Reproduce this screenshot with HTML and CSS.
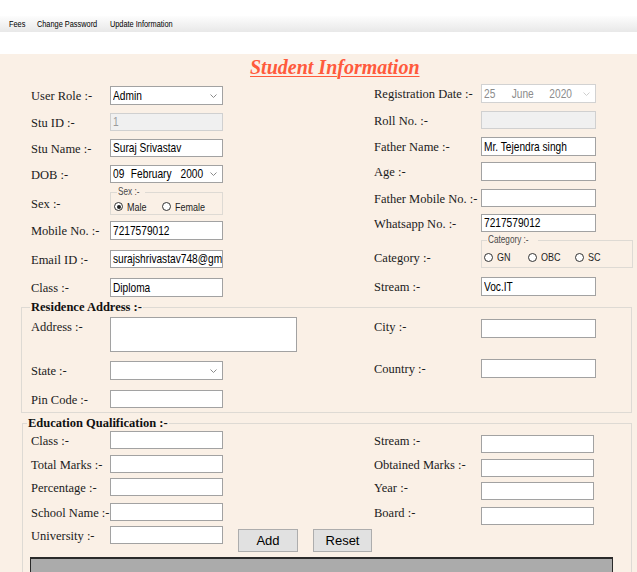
FILE: index.html
```html
<!DOCTYPE html>
<html lang="en">
<head>
<meta charset="utf-8">
<title>Student Information</title>
<link rel="stylesheet" href="styles.css">
</head>
<body>
<div class="topstrip"></div>
<nav class="menubar">
  <div class="menu-items">
    <span class="menu-item">Fees</span>
    <span class="menu-item">Change Password</span>
    <span class="menu-item">Update Information</span>
  </div>
</nav>
<div class="spacer"></div>
<main class="panel">
  <h1 class="title">Student Information</h1>

  <div class="top-grid">
    <div class="col left">
      <div class="row h27"><span class="lbl">User Role :-</span>
        <div class="field select"><span class="nt">Admin</span><svg class="chev" viewBox="0 0 7 4"><polyline points="0.5,0.5 3.5,3.5 6.5,0.5"/></svg></div></div>
      <div class="row h26"><span class="lbl">Stu ID :-</span><div class="field s18 disabled"><span class="nt">1</span></div></div>
      <div class="row h26"><span class="lbl">Stu Name :-</span><div class="field s18"><span class="nt">Suraj Srivastav</span></div></div>
      <div class="row h23"><span class="lbl">DOB :-</span>
        <div class="field s18 select"><span class="nt">09<span class="gap-a">February</span><span class="gap-b">2000</span></span><svg class="chev" viewBox="0 0 7 4"><polyline points="0.5,0.5 3.5,3.5 6.5,0.5"/></svg></div></div>
      <div class="row h33"><span class="lbl lbl-sex">Sex :-</span>
        <fieldset class="radio-group sex">
          <legend><span class="nt">Sex :-</span></legend>
          <span class="opt opt-male"><span class="radio checked"></span><span class="nt">Male</span></span>
          <span class="opt"><span class="radio"></span><span class="nt">Female</span></span>
        </fieldset></div>
      <div class="row h29"><span class="lbl">Mobile No. :-</span><div class="field"><span class="nt">7217579012</span></div></div>
      <div class="row h28"><span class="lbl">Email ID :-</span><div class="field s18"><span class="nt">surajshrivastav748@gmail.com</span></div></div>
      <div class="row h22"><span class="lbl">Class :-</span><div class="field"><span class="nt">Diploma</span></div></div>
    </div>

    <div class="col right">
      <div class="row h27"><span class="lbl">Registration Date :-</span>
        <div class="field faded select"><span class="nt">25<span class="gap-c">June</span><span class="gap-d">2020</span></span><svg class="chev" viewBox="0 0 7 4"><polyline points="0.5,0.5 3.5,3.5 6.5,0.5"/></svg></div></div>
      <div class="row h26"><span class="lbl">Roll No. :-</span><div class="field s18 disabled"></div></div>
      <div class="row h25"><span class="lbl">Father Name :-</span><div class="field"><span class="nt">Mr. Tejendra singh</span></div></div>
      <div class="row h27"><span class="lbl">Age :-</span><div class="field"></div></div>
      <div class="row h25"><span class="lbl">Father Mobile No. :-</span><div class="field s18"></div></div>
      <div class="row h22"><span class="lbl">Whatsapp No. :-</span><div class="field s18"><span class="nt">7217579012</span></div></div>
      <div class="row h41"><span class="lbl lbl-cat">Category :-</span>
        <fieldset class="radio-group category">
          <legend><span class="nt">Category :-</span></legend>
          <span class="opt opt-gn"><span class="radio"></span><span class="nt">GN</span></span>
          <span class="opt opt-obc"><span class="radio"></span><span class="nt">OBC</span></span>
          <span class="opt"><span class="radio"></span><span class="nt">SC</span></span>
        </fieldset></div>
      <div class="row h23"><span class="lbl">Stream :-</span><div class="field"><span class="nt">Voc.IT</span></div></div>
    </div>
  </div>

  <fieldset class="group residence">
    <legend>Residence Address :-</legend>
    <div class="res-grid">
      <div class="col left">
        <div class="row h44"><span class="lbl">Address :-</span><div class="field textarea"></div></div>
        <div class="row h29"><span class="lbl">State :-</span>
          <div class="field select"><svg class="chev" viewBox="0 0 7 4"><polyline points="0.5,0.5 3.5,3.5 6.5,0.5"/></svg></div></div>
        <div class="row h22"><span class="lbl">Pin Code :-</span><div class="field s18"></div></div>
      </div>
      <div class="col right">
        <div class="row h40"><span class="lbl lbl-up">City :-</span><div class="field"></div></div>
        <div class="row h29"><span class="lbl">Country :-</span><div class="field"></div></div>
      </div>
    </div>
  </fieldset>

  <fieldset class="group education">
    <legend>Education Qualification :-</legend>
    <div class="edu-body">
      <div class="edu-row h24">
        <span class="lbl">Class :-</span><div class="field s18"></div><span></span>
        <span class="lbl">Stream :-</span><div class="field s18 shift"></div>
      </div>
      <div class="edu-row h23">
        <span class="lbl">Total Marks :-</span><div class="field s18"></div><span></span>
        <span class="lbl">Obtained Marks :-</span><div class="field s18 shift"></div>
      </div>
      <div class="edu-row h25">
        <span class="lbl">Percentage :-</span><div class="field s18"></div><span></span>
        <span class="lbl">Year :-</span><div class="field s18 shift"></div>
      </div>
      <div class="edu-row h23">
        <span class="lbl">School Name :-</span><div class="field s18"></div><span></span>
        <span class="lbl">Board :-</span><div class="field s18 shift"></div>
      </div>
      <div class="edu-row h31">
        <span class="lbl">University :-</span><div class="field s18"></div>
        <div class="btns"><span class="btn">Add</span><span class="btn btn-reset">Reset</span></div>
      </div>
      <div class="grid-view"></div>
    </div>
  </fieldset>
</main>
</body>
</html>
```

FILE: styles.css
```css
* { box-sizing: border-box; }
html, body { margin: 0; padding: 0; }
body {
  width: 637px;
  height: 572px;
  overflow: hidden;
  background: #ffffff;
  font-family: "Liberation Serif", "Times New Roman", serif;
  color: #1b1b1b;
}

/* Narrow sans text (the form draws a condensed system font) */
.nt {
  display: inline-block;
  transform: scaleX(0.82);
  transform-origin: 0 50%;
  white-space: nowrap;
}

.topstrip { height: 16px; }
.menubar {
  height: 16px;
  display: flex;
  align-items: center;
  padding-left: 9px;
  background: linear-gradient(#fdfdfd, #e8e8e8);
  font-family: "Liberation Sans", Arial, sans-serif;
  font-size: 9px;
  color: #000;
}
.menu-items {
  display: flex;
  transform: scaleX(0.82);
  transform-origin: 0 50%;
  white-space: nowrap;
}
.menu-item:nth-child(2) { margin-left: 14px; }
.menu-item:nth-child(3) { margin-left: 15.5px; }
.spacer { height: 22px; }

.panel {
  height: 518px;
  background: #faf0e6;
  overflow: hidden;
}
.title {
  margin: 0;
  height: 30px;
  padding: 2px 0 0 250px;
  font: italic bold 20px/22px "Liberation Serif", serif;
  color: #ff5a3c;
  text-decoration: underline;
  text-underline-offset: 2px;
  text-decoration-thickness: 1px;
}

.top-grid {
  display: grid;
  grid-template-columns: 374px 263px;
  height: 216px;
}
.col { display: flex; flex-direction: column; }
.top-grid .left { padding: 2px 0 0 31px; }

.row { display: flex; align-items: flex-start; flex: none; }
.h22 { height: 22px; }
.h23 { height: 23px; }
.h24 { height: 24px; }
.h25 { height: 25px; }
.h26 { height: 26px; }
.h27 { height: 27px; }
.h28 { height: 28px; }
.h29 { height: 29px; }
.h31 { height: 31px; }
.h33 { height: 33px; }
.h40 { height: 40px; }
.h41 { height: 41px; }
.h44 { height: 44px; }

.lbl {
  flex: none;
  width: 79px;
  padding-top: 1px;
  font-size: 12.5px;
  line-height: 19px;
  white-space: nowrap;
  color: #1b1b1b;
}
.right .lbl { width: 107px; }
.lbl-sex { margin-top: 6px; }
.lbl-cat { margin-top: 12px; }
.lbl-up { margin-top: -2px; }

.field {
  flex: none;
  position: relative;
  width: 113px;
  height: 19px;
  background: #ffffff;
  border: 1px solid #a2a2a2;
  padding-left: 2px;
  display: flex;
  align-items: center;
  font-family: "Liberation Sans", Arial, sans-serif;
  font-size: 12.4px;
  color: #000;
  white-space: nowrap;
  overflow: hidden;
}
.right .field { width: 115px; }
.field.s18 { height: 18px; }
.field.disabled { background: #f0f0f0; border-color: #d0d0d0; color: #9a9a9a; }
.field.faded { border-color: #d2d2d2; color: #8c8c8c; }
.field.textarea { width: 187px; height: 35px; }
.gap-a { margin-left: 8px; }
.gap-b { margin-left: 11px; }
.gap-c { margin-left: 20px; }
.gap-d { margin-left: 19px; }

.chev {
  position: absolute;
  right: 5px;
  top: 50%;
  width: 7px;
  height: 4px;
  margin-top: -2px;
  fill: none;
  stroke: #8a8a8a;
  stroke-width: 1;
}
.faded .chev { stroke: #cfcfcf; }

.radio-group {
  flex: none;
  margin: 0;
  padding: 3px 0 0 3px;
  min-width: 0;
  border: 1px solid #dedad4;
  display: flex;
  align-items: center;
  font-family: "Liberation Sans", Arial, sans-serif;
  font-size: 11px;
  color: #1e1e1e;
}
.radio-group > legend {
  margin-left: 3px;
  padding: 0 1px;
  font-size: 10px;
  line-height: 8px;
  color: #4a4a4a;
}
.sex { width: 113px; height: 27px; }
.category { width: 152px; height: 32px; padding-left: 2px; }
.opt { display: inline-flex; align-items: center; gap: 4px; flex: none; }
.opt-male { width: 48px; }
.opt-gn { width: 44px; }
.opt-obc { width: 47px; }
.radio {
  flex: none;
  width: 9px;
  height: 9px;
  border: 1px solid #333;
  border-radius: 50%;
  background: #fff;
  position: relative;
}
.radio.checked::after {
  content: "";
  position: absolute;
  left: 1.5px;
  top: 1.5px;
  width: 4px;
  height: 4px;
  border-radius: 50%;
  background: #222;
}

.group {
  margin: 0;
  padding: 0;
  min-width: 0;
  border: 1px solid #dedad4;
}
.group > legend {
  padding: 0 1px;
  font-weight: bold;
  font-size: 12.5px;
  line-height: 14px;
  color: #111;
}
.residence { margin-left: 21px; width: 611px; height: 113px; }
.residence > legend { margin-left: 8px; }
.res-grid { display: grid; grid-template-columns: 352px 1fr; }
.res-grid .left { padding: 3px 0 0 9px; }
.res-grid .right { padding-top: 5px; }

.education { margin: 3px 0 0 22px; width: 610px; height: 240px; }
.education > legend { margin-left: 4px; }
.edu-body { padding-top: 1px; }
.edu-row {
  display: grid;
  grid-template-columns: 79px 113px 151px 107px 115px;
  padding-left: 8px;
  align-items: start;
}
.edu-row .field.shift { margin-top: 4px; }
.btns {
  grid-column: 3 / span 3;
  display: flex;
  gap: 15px;
  padding-left: 15px;
  margin-top: 3px;
}
.btn {
  width: 60px;
  height: 23px;
  background: #e1e1e1;
  border: 1px solid #adadad;
  display: flex;
  align-items: center;
  justify-content: center;
  font-family: "Liberation Sans", Arial, sans-serif;
  font-size: 13px;
  color: #000;
}
.btn-reset { width: 59px; }

.grid-view {
  margin-left: 7px;
  width: 583px;
  height: 60px;
  background: #ababab;
  border: 1px solid #2a2a2a;
  border-top-width: 2px;
}
```
